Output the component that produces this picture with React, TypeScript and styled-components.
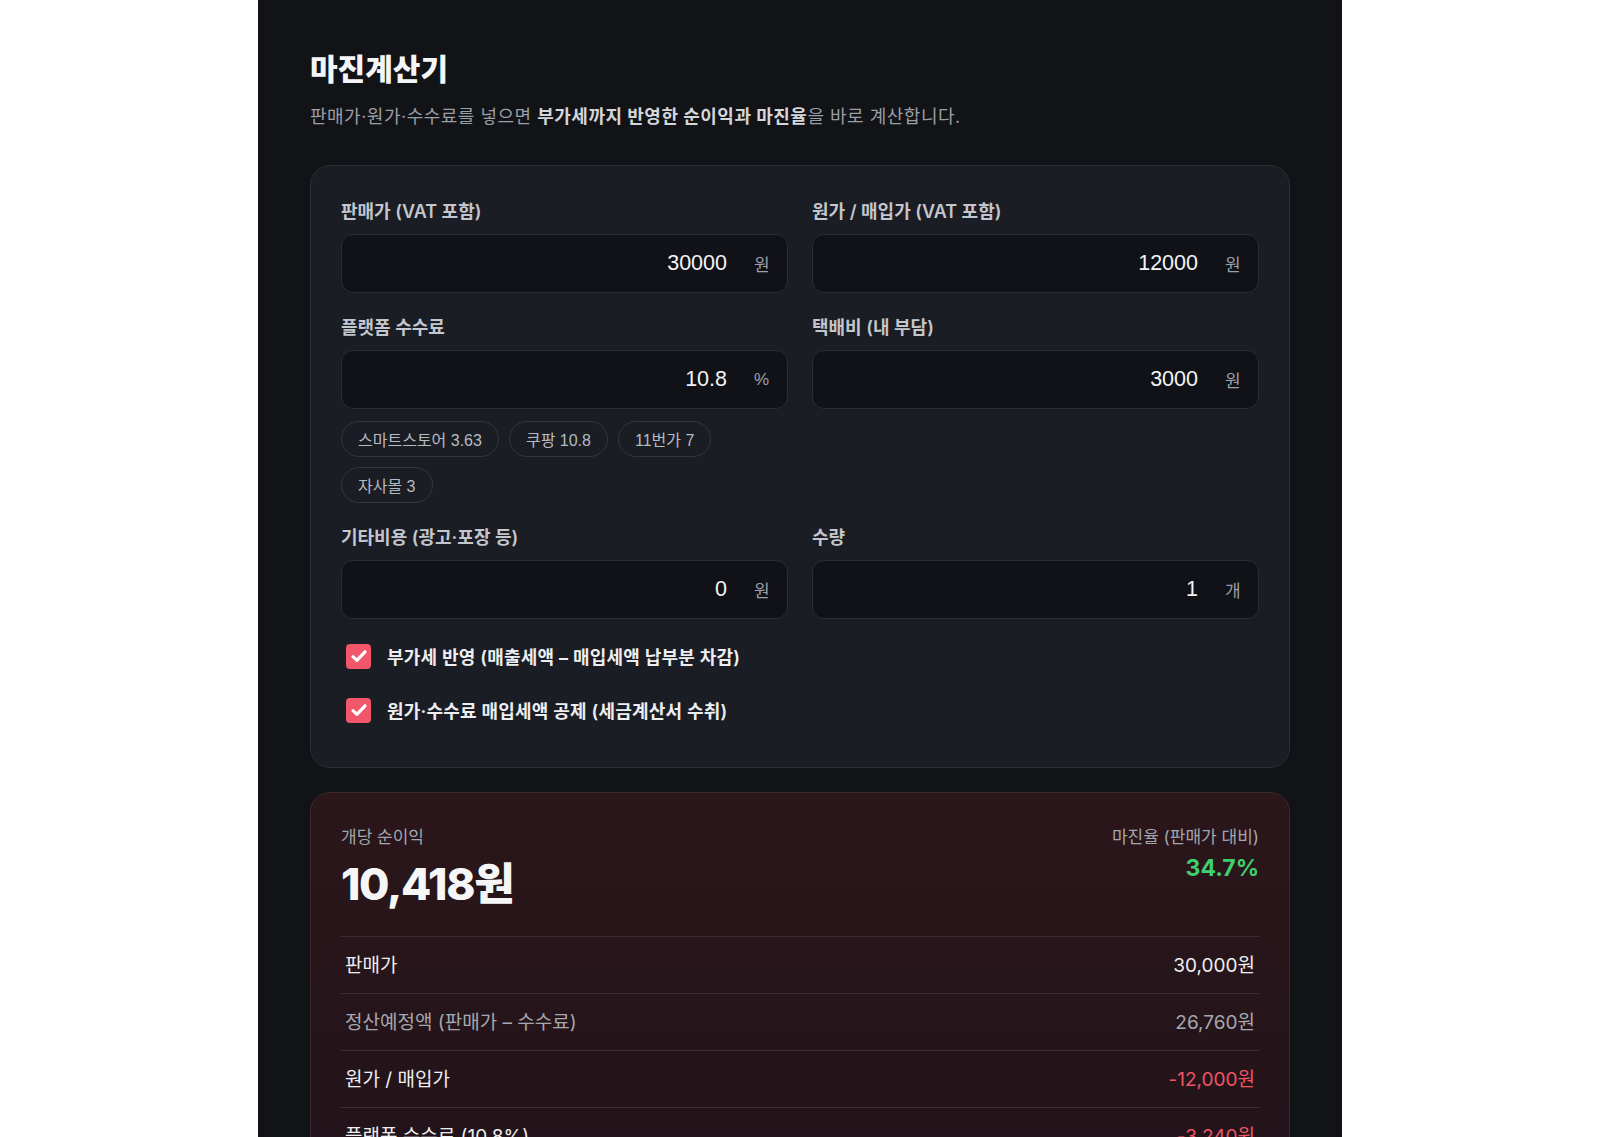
import React, { useState } from 'react';
import styled, { createGlobalStyle } from 'styled-components';

const GlobalStyle = createGlobalStyle`
  * { box-sizing: border-box; }
  body {
    margin: 0;
    background: #ffffff;
    font-family: Inter, "Noto Sans CJK KR", sans-serif;
    color: #eceef1;
  }
`;

interface Field {
  label: string;
  value: string;
  unit: string;
}

interface Row {
  label: string;
  value: string;
  tone: 'normal' | 'muted' | 'minus';
}

const presets = ['스마트스토어 3.63', '쿠팡 10.8', '11번가 7', '자사몰 3'];

const rows: Row[] = [
  { label: '판매가', value: '30,000원', tone: 'normal' },
  { label: '정산예정액 (판매가 – 수수료)', value: '26,760원', tone: 'muted' },
  { label: '원가 / 매입가', value: '-12,000원', tone: 'minus' },
  { label: '플랫폼 수수료 (10.8%)', value: '-3,240원', tone: 'minus' },
  { label: '택배비', value: '-3,000원', tone: 'minus' },
  { label: '기타비용', value: '-0원', tone: 'minus' },
  { label: '부가세 납부분', value: '-1,342원', tone: 'minus' },
];

const NumberField = ({ label, value, unit }: Field) => (
  <FieldBox>
    <FieldLabel>{label}</FieldLabel>
    <InputWrap>
      <ValueInput defaultValue={value} inputMode="decimal" />
      <Unit>{unit}</Unit>
    </InputWrap>
  </FieldBox>
);

const CheckRow = ({ label }: { label: string }) => {
  const [on, setOn] = useState(true);
  return (
    <CheckLine onClick={() => setOn(!on)}>
      <CheckBox $on={on}>
        {on && (
          <svg width="20" height="20" viewBox="0 0 20 20" fill="none">
            <path
              d="M4 10.6l3.9 3.8L16 5.8"
              stroke="#fff"
              strokeWidth="3.2"
              strokeLinecap="round"
              strokeLinejoin="round"
            />
          </svg>
        )}
      </CheckBox>
      <CheckText>{label}</CheckText>
    </CheckLine>
  );
};

const App = () => {
  return (
    <>
      <GlobalStyle />
      <Page>
        <Title>마진계산기</Title>
        <Lead>
          판매가·원가·수수료를 넣으면 <strong>부가세까지 반영한 순이익과 마진율</strong>을 바로 계산합니다.
        </Lead>

        <Card>
          <FieldGrid>
            <NumberField label="판매가 (VAT 포함)" value="30000" unit="원" />
            <NumberField label="원가 / 매입가 (VAT 포함)" value="12000" unit="원" />
            <FieldBox>
              <NumberField label="플랫폼 수수료" value="10.8" unit="%" />
              <Chips>
                {presets.map((p) => (
                  <Chip key={p}>{p}</Chip>
                ))}
              </Chips>
            </FieldBox>
            <NumberField label="택배비 (내 부담)" value="3000" unit="원" />
            <NumberField label="기타비용 (광고·포장 등)" value="0" unit="원" />
            <NumberField label="수량" value="1" unit="개" />
          </FieldGrid>
          <Checks>
            <CheckRow label="부가세 반영 (매출세액 – 매입세액 납부분 차감)" />
            <CheckRow label="원가·수수료 매입세액 공제 (세금계산서 수취)" />
          </Checks>
        </Card>

        <ResultCard>
          <ResultHead>
            <div>
              <SmallLabel>개당 순이익</SmallLabel>
              <Profit>10,418원</Profit>
            </div>
            <RateBox>
              <SmallLabel>마진율 (판매가 대비)</SmallLabel>
              <Rate>34.7%</Rate>
            </RateBox>
          </ResultHead>
          <Rows>
            {rows.map((r) => (
              <RowLine key={r.label} $tone={r.tone}>
                <span>{r.label}</span>
                <RowValue $tone={r.tone}>{r.value}</RowValue>
              </RowLine>
            ))}
          </Rows>
        </ResultCard>
      </Page>
    </>
  );
};

const Page = styled.main`
  width: 1084px;
  margin: 0 auto;
  min-height: 1400px;
  background: #121317;
  padding: 50px 52px 60px;
`;

const Title = styled.h1`
  margin: 0;
  font-size: 30px;
  line-height: 38px;
  font-weight: 800;
  color: #f4f5f7;
`;

const Lead = styled.p`
  margin: 16px 0 35px;
  font-size: 18px;
  line-height: 26px;
  letter-spacing: 0.5px;
  color: #9a9ea6;

  strong {
    font-weight: 700;
    color: #d4d6da;
  }
`;

const Card = styled.section`
  background: #1b1d24;
  border: 1px solid #2b2e36;
  border-radius: 20px;
  padding: 35px 30px 42px;
`;

const FieldGrid = styled.div`
  display: grid;
  grid-template-columns: 1fr 1fr;
  column-gap: 24px;
  row-gap: 24px;
  align-items: start;
`;

const FieldBox = styled.div`
  display: flex;
  flex-direction: column;
`;

const FieldLabel = styled.label`
  font-size: 18px;
  line-height: 22px;
  font-weight: 600;
  color: #c3c6cc;
  margin-bottom: 11px;
`;

const InputWrap = styled.div`
  display: flex;
  align-items: center;
  height: 59px;
  background: #111217;
  border: 1px solid #2a2d35;
  border-radius: 12px;
  padding: 0 17px 0 16px;
`;

const ValueInput = styled.input`
  flex: 1;
  min-width: 0;
  background: transparent;
  border: none;
  outline: none;
  text-align: right;
  font-family: "Liberation Sans", "Noto Sans CJK KR", sans-serif;
  font-size: 21.5px;
  color: #f3f4f6;
`;

const Unit = styled.span`
  width: 16px;
  margin-left: 25px;
  font-family: "Liberation Sans", "Noto Sans CJK KR", sans-serif;
  font-size: 17px;
  color: #9ca0a8;
`;

const Chips = styled.div`
  display: flex;
  flex-wrap: wrap;
  gap: 10px;
  margin-top: 12px;
`;

const Chip = styled.button`
  height: 36px;
  padding: 0 16px;
  border: 1px solid #33363e;
  border-radius: 999px;
  background: #1b1d24;
  font-family: "Liberation Sans", "Noto Sans CJK KR", sans-serif;
  font-size: 16px;
  color: #b6bac1;
  cursor: pointer;
`;

const Checks = styled.div`
  display: flex;
  flex-direction: column;
  gap: 24px;
  margin-top: 22px;
`;

const CheckLine = styled.div`
  display: flex;
  align-items: center;
  gap: 16px;
  height: 30px;
  padding-left: 5px;
  cursor: pointer;
`;

const CheckBox = styled.span<{ $on: boolean }>`
  display: flex;
  align-items: center;
  justify-content: center;
  width: 25px;
  height: 25px;
  border-radius: 4px;
  background: ${(p) => (p.$on ? '#f1566a' : 'transparent')};
  border: ${(p) => (p.$on ? 'none' : '2px solid #5a5e66')};
`;

const CheckText = styled.span`
  font-size: 18px;
  font-weight: 600;
  letter-spacing: 0.2px;
  color: #eceef1;
`;

const ResultCard = styled.section`
  margin-top: 24px;
  background: linear-gradient(180deg, #2b161a 0%, #22141a 60%, #1f1318 100%);
  border: 1px solid #3a2a2e;
  border-radius: 20px;
  padding: 33px 30px 30px;
`;

const ResultHead = styled.div`
  display: flex;
  justify-content: space-between;
  align-items: flex-start;
  padding-bottom: 25px;
  border-bottom: 1px solid #3b2d31;
`;

const SmallLabel = styled.div`
  font-size: 17px;
  line-height: 22px;
  color: #a3a6ad;
`;

const Profit = styled.div`
  margin-top: 9px;
  font-size: 44px;
  line-height: 54px;
  font-weight: 800;
  letter-spacing: -1.3px;
  color: #f6f6f7;
`;

const RateBox = styled.div`
  text-align: right;
`;

const Rate = styled.div`
  margin-top: 5px;
  font-size: 23px;
  line-height: 30px;
  font-weight: 700;
  color: #3fcf6f;
`;

const Rows = styled.div`
  display: flex;
  flex-direction: column;
`;

const RowLine = styled.div<{ $tone: Row['tone'] }>`
  display: flex;
  justify-content: space-between;
  align-items: center;
  padding: 18px 4px 17px;
  border-bottom: 1px solid #3b2d31;
  font-size: 19px;
  line-height: 21px;
  color: ${(p) => (p.$tone === 'muted' ? '#a5a8ae' : '#eeeff1')};
`;

const RowValue = styled.span<{ $tone: Row['tone'] }>`
  color: ${(p) =>
    p.$tone === 'minus' ? '#ee5463' : p.$tone === 'muted' ? '#a5a8ae' : '#eeeff1'};
`;

export default App;
